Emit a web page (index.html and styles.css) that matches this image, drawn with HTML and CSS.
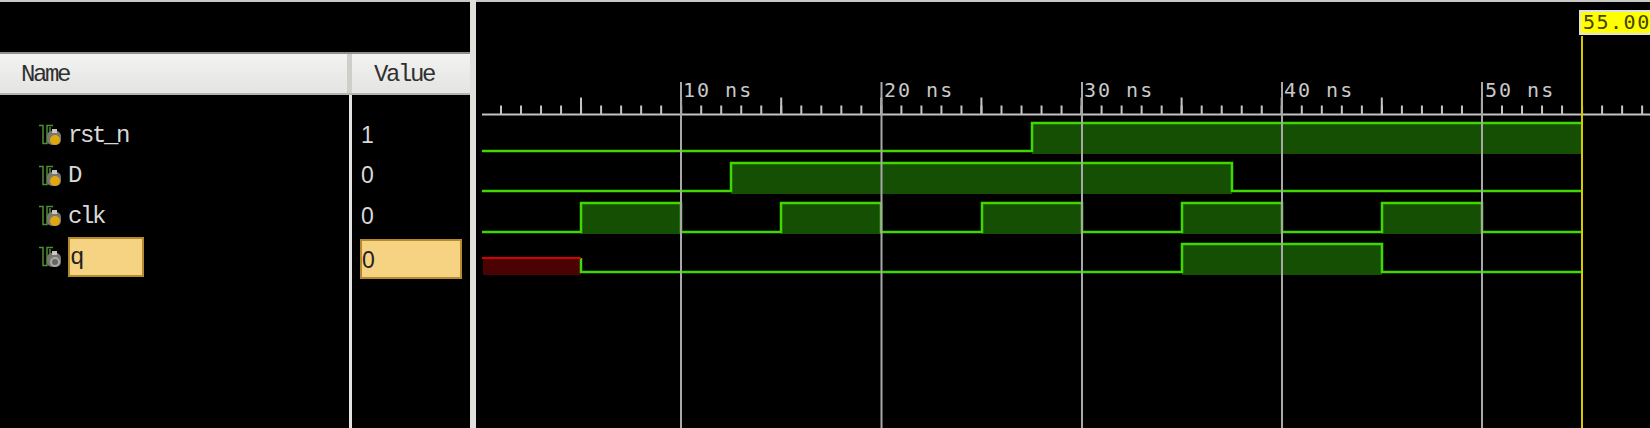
FILE: index.html
```html
<!doctype html>
<html lang="en">
    <head>
        <meta charset="UTF-8" />
        <meta name="viewport" content="width=device-width, initial-scale=1.0" />
        <title>Wave Viewer</title>
        <link rel="stylesheet" href="styles.css">
    </head>
    <body>
        <svg width="0" height="0" class="defs">
            <defs>
                <symbol id="wire" viewBox="0 0 24 22">
                    <path d="M1 1.5H5V19.5H9V1.5H15" fill="none" stroke="#4c8f34" stroke-width="1.5" />
                    <path d="M12 3V17" fill="none" stroke="#4c8f34" stroke-width="1.5" />
                    <rect x="9" y="7" width="14" height="14" rx="5" fill="#77776e" />
                    <path d="M14 5H19V9H14Z" fill="#c8c8c0" />
                </symbol>
            </defs>
        </svg>
        <main class="viewer">
            <section class="names-pane">
                <div class="pane-top"></div>
                <header class="columns-head">
                    <div class="head-name">Name</div>
                    <div class="head-value">Value</div>
                </header>
                <div class="columns">
                    <div class="col-name">
                        <div class="row">
                            <svg class="icon"><use href="#wire" /></svg>
                            <span class="dot"></span>
                            <span class="label">rst_n</span>
                        </div>
                        <div class="row">
                            <svg class="icon"><use href="#wire" /></svg>
                            <span class="dot"></span>
                            <span class="label">D</span>
                        </div>
                        <div class="row">
                            <svg class="icon"><use href="#wire" /></svg>
                            <span class="dot"></span>
                            <span class="label">clk</span>
                        </div>
                        <div class="row">
                            <svg class="icon"><use href="#wire" /></svg>
                            <span class="dot dot-out"></span>
                            <span class="label selected">q</span>
                        </div>
                    </div>
                    <div class="col-value">
                        <div class="row"><span class="label">1</span></div>
                        <div class="row"><span class="label">0</span></div>
                        <div class="row"><span class="label">0</span></div>
                        <div class="row"><span class="label selected">0</span></div>
                    </div>
                </div>
            </section>
            <div class="splitter"></div>
            <section class="wave-pane">
                <svg class="wave" viewBox="476 2 1174 426" width="1174" height="426">
                    <!-- fills under the high parts of each signal -->
                    <g class="fill-high">
                        <rect x="1032" y="123" width="550" height="31" />
                        <rect x="731" y="163" width="501" height="31" />
                        <rect x="581" y="203" width="100" height="31" />
                        <rect x="781" y="203" width="100" height="31" />
                        <rect x="982" y="203" width="100" height="31" />
                        <rect x="1182" y="203" width="100" height="31" />
                        <rect x="1382" y="203" width="100" height="31" />
                        <rect x="1182" y="244" width="200" height="31" />
                    </g>
                    <rect class="fill-x" x="483" y="258" width="98" height="17" />

                    <!-- time axis: minor ticks every ns, major every 5 ns -->
                    <line class="axis" x1="482" y1="114.5" x2="1650" y2="114.5" />
                    <line class="tick" x1="500" y1="110" x2="1650" y2="110" stroke-width="9" stroke-dasharray="2 18.02" />
                    <line class="tick" x1="580" y1="106" x2="1650" y2="106" stroke-width="17" stroke-dasharray="2 98.1" />

                    <g class="time">
                        <text x="683" y="97">10 ns</text>
                        <text x="884" y="97">20 ns</text>
                        <text x="1084" y="97">30 ns</text>
                        <text x="1284" y="97">40 ns</text>
                        <text x="1485" y="97">50 ns</text>
                    </g>

                    <g class="signal">
                        <path d="M482 151H1032V123H1582" />
                        <path d="M482 191H731V163H1232V191H1582" />
                        <path d="M482 232H581V203H681V232H781V203H881V232H982V203H1082V232H1182V203H1282V232H1382V203H1482V232H1582" />
                        <path d="M581 258V272H1182V244H1382V272H1582" />
                    </g>
                    <path class="signal-x" d="M482 258H581" />

                    <g class="grid">
                        <line x1="681" y1="82" x2="681" y2="428" />
                        <line x1="881.5" y1="82" x2="881.5" y2="428" />
                        <line x1="1082" y1="82" x2="1082" y2="428" />
                        <line x1="1282" y1="82" x2="1282" y2="428" />
                        <line x1="1482" y1="82" x2="1482" y2="428" />
                    </g>

                    <line class="cursor" x1="1582" y1="36" x2="1582" y2="428" />
                    <rect class="cursor-box" x="1580" y="11" width="72" height="23" />
                    <text class="cursor-text" x="1583" y="29">55.00</text>
                </svg>
            </section>
        </main>
    </body>
</html>
```

FILE: styles.css
```css
html,
body {
    margin: 0;
    padding: 0;
    height: 100%;
    background-color: #000;
    overflow: hidden;
}
.defs {
    position: absolute;
}
.viewer {
    display: flex;
    height: 428px;
    border-top: 2px solid #c8c8c4;
    box-sizing: border-box;
    font-family: "Liberation Mono", monospace;
    color: #d8d8d8;
}
.names-pane {
    width: 470px;
    flex: none;
    display: flex;
    flex-direction: column;
}
.pane-top {
    height: 50px;
}
.columns-head {
    display: flex;
    height: 43px;
    box-sizing: border-box;
    border-top: 2px solid #8f8f8c;
    border-bottom: 2px solid #b5b5b0;
    background: linear-gradient(#f2f2f1, #e4e4e3);
    color: #303030;
    font-size: 24px;
    letter-spacing: -2.4px;
    line-height: 41px;
}
.head-name {
    width: 347px;
    padding-left: 21px;
    box-sizing: border-box;
}
.head-value {
    flex: 1;
    padding-left: 22px;
    border-left: 5px solid #cfcfca;
}
.columns {
    flex: 1;
    display: flex;
}
.col-name {
    width: 349px;
    flex: none;
    padding-top: 20px;
}
.col-value {
    flex: 1;
    padding-left: 9px;
    padding-top: 20px;
    border-left: 3px solid #e2e2e0;
    font-family: "Liberation Sans", sans-serif;
}
.row {
    display: flex;
    align-items: center;
    height: 40.5px;
    font-size: 24px;
    letter-spacing: -2.4px;
    position: relative;
}
.col-name .row {
    padding-left: 38px;
}
.col-value .row {
    letter-spacing: 0;
    font-size: 23px;
}
.icon {
    width: 24px;
    height: 22px;
    margin-right: 6px;
}
.dot {
    position: absolute;
    left: 50px;
    top: 20px;
    width: 10px;
    height: 10px;
    border-radius: 50%;
    background-color: #e0a810;
}
.dot-out {
    background-color: #666;
    border: 2px solid #aaa;
    box-sizing: border-box;
}
.selected {
    display: block;
    box-sizing: border-box;
    height: 40px;
    line-height: 38px;
    background-color: #f5d382;
    border: 2px solid #b58a2c;
    color: #222;
}
.col-name .selected {
    width: 76px;
}
.col-value .selected {
    width: 102px;
    margin-top: 4px;
    margin-left: -1px;
}
.splitter {
    width: 6px;
    flex: none;
    margin-top: -2px;
    background-color: #dfdfdb;
}
.wave-pane {
    flex: 1;
    overflow: hidden;
}
.wave {
    display: block;
}
.fill-high rect {
    fill: #144f04;
}
.fill-x {
    fill: #4a0202;
}
.axis {
    stroke: #c4c4c4;
    stroke-width: 2;
}
.tick {
    stroke: #c4c4c4;
}
.grid line {
    stroke: #a8a8a8;
    stroke-width: 2;
}
.time text {
    font-family: "DejaVu Sans Mono", monospace;
    font-size: 20px;
    letter-spacing: 2px;
    fill: #c8c8c8;
}
.signal path {
    fill: none;
    stroke: #40d800;
    stroke-width: 2.5;
}
.signal-x {
    fill: none;
    stroke: #d80000;
    stroke-width: 2;
}
.cursor {
    stroke: #d8c800;
    stroke-width: 2;
}
.cursor-box {
    fill: #ffff00;
    stroke: #e0e0e0;
    stroke-width: 2;
}
.cursor-text {
    font-family: "DejaVu Sans Mono", monospace;
    font-size: 20px;
    letter-spacing: 1.5px;
    fill: #444400;
}
```
